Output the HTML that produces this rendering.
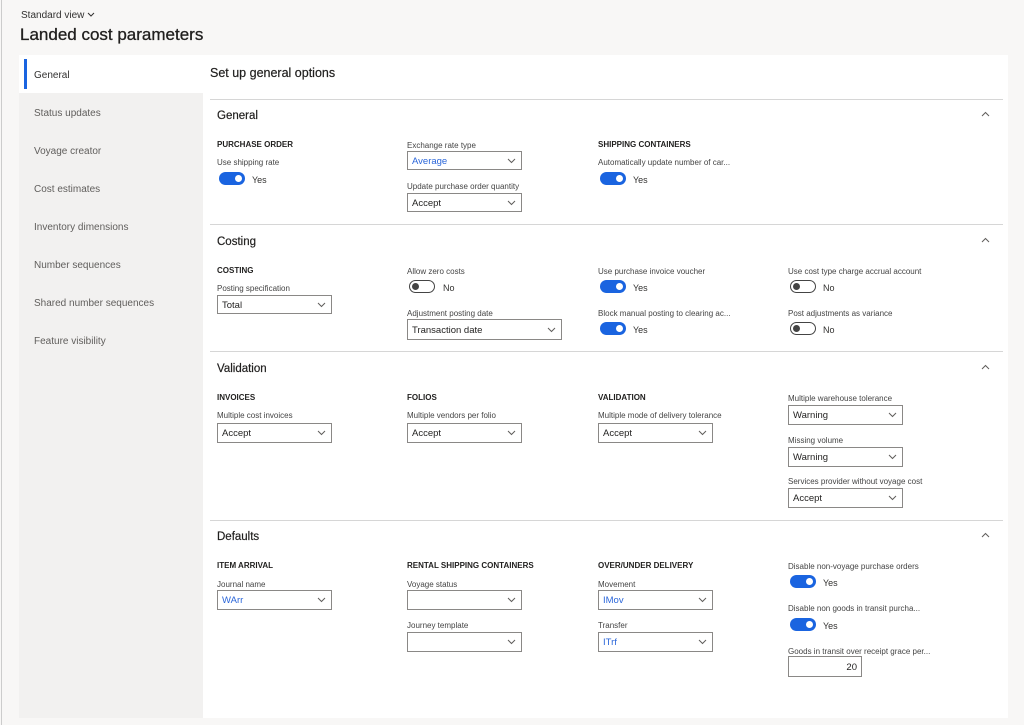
<!DOCTYPE html><html><head><style>
body{margin:0;width:1024px;height:725px;background:#f8f7f6;font-family:"Liberation Sans",sans-serif;position:relative;overflow:hidden;color:#323130}
.a{position:absolute;white-space:nowrap}
.nav{font-size:10px;color:#605e5c;margin-top:2px}
.h{font-size:11.5px;color:#201f1e;margin-top:2px;-webkit-text-stroke:0.2px #201f1e}
.gh{font-size:8px;font-weight:bold;color:#201f1e;margin-top:1px}
.lb{font-size:8px;color:#444;margin-top:1px}
.dd{position:absolute;height:19px;border:1px solid #8a8886;background:#fff;box-sizing:border-box;font-size:9.5px;line-height:19px;padding-left:4px;color:#201f1e}
.dd.b{color:#2b66d9}
.dd svg{position:absolute;right:5px;top:6px}
.tg{position:absolute;width:26px;height:13px;border-radius:7px;box-sizing:border-box}
.on{background:#1a64e0}
.on:after{content:"";position:absolute;right:3px;top:3px;width:7px;height:7px;border-radius:50%;background:#fff}
.off{border:1px solid #444;background:#fff}
.off:after{content:"";position:absolute;left:2px;top:2px;width:7px;height:7px;border-radius:50%;background:#444}
.tv{font-size:9px;color:#323130;margin-top:1px}
.ln{position:absolute;left:210px;width:793px;height:1px;background:#d6d6d6}
.car{position:absolute;left:981px}
</style></head><body>
<div class="a" style="left:1px;top:0;width:1px;height:725px;background:#ccc"></div>
<div class="a" style="left:21px;top:10px;font-size:10px;color:#323130">Standard view <svg width="8" height="6" viewBox="0 0 8 6"><path d="M1 1l3 3 3-3" stroke="#323130" fill="none"/></svg></div>
<div class="a" style="left:20px;top:25px;font-size:17px;color:#201f1e;-webkit-text-stroke:0.3px #201f1e">Landed cost parameters</div>
<div class="a" style="left:19px;top:55px;width:184px;height:663px;background:#f2f1f0"></div>
<div class="a" style="left:19px;top:55px;width:184px;height:38px;background:#fff"></div>
<div class="a" style="left:24px;top:59px;width:3px;height:30px;background:#1a64e0"></div>
<div class="a" style="left:203px;top:55px;width:805px;height:663px;background:#fff"></div>
<div class="a nav" style="left:34px;top:68px;color:#323130">General</div>
<div class="a nav" style="left:34px;top:106px">Status updates</div>
<div class="a nav" style="left:34px;top:144px">Voyage creator</div>
<div class="a nav" style="left:34px;top:182px">Cost estimates</div>
<div class="a nav" style="left:34px;top:220px">Inventory dimensions</div>
<div class="a nav" style="left:34px;top:258px">Number sequences</div>
<div class="a nav" style="left:34px;top:296px">Shared number sequences</div>
<div class="a nav" style="left:34px;top:334px">Feature visibility</div>
<div class="a" style="left:210px;top:66px;font-size:12.5px;color:#201f1e;-webkit-text-stroke:0.2px #201f1e">Set up general options</div>

<div class="ln" style="top:99px"></div>
<div class="ln" style="top:224px"></div>
<div class="ln" style="top:351px"></div>
<div class="ln" style="top:520px"></div>
<svg class="car" style="top:111px" width="9" height="6"><path d="M1 5l3.5-3.5L8 5" stroke="#605e5c" fill="none"/></svg>
<svg class="car" style="top:237px" width="9" height="6"><path d="M1 5l3.5-3.5L8 5" stroke="#605e5c" fill="none"/></svg>
<svg class="car" style="top:364px" width="9" height="6"><path d="M1 5l3.5-3.5L8 5" stroke="#605e5c" fill="none"/></svg>
<svg class="car" style="top:532px" width="9" height="6"><path d="M1 5l3.5-3.5L8 5" stroke="#605e5c" fill="none"/></svg>

<div class="a h" style="left:217px;top:108px">General</div>
<div class="a gh" style="left:217px;top:139px">PURCHASE ORDER</div>
<div class="a lb" style="left:217px;top:157px">Use shipping rate</div>
<div class="tg on" style="left:219px;top:172px"></div><div class="a tv" style="left:252px;top:174px">Yes</div>
<div class="a lb" style="left:407px;top:140px">Exchange rate type</div>
<div class="dd b" style="left:407px;top:151px;width:115px">Average<svg width="9" height="6"><path d="M1 1l3.5 3.5L8 1" stroke="#605e5c" fill="none"/></svg></div>
<div class="a lb" style="left:407px;top:181px">Update purchase order quantity</div>
<div class="dd" style="left:407px;top:193px;width:115px">Accept<svg width="9" height="6"><path d="M1 1l3.5 3.5L8 1" stroke="#605e5c" fill="none"/></svg></div>
<div class="a gh" style="left:598px;top:139px">SHIPPING CONTAINERS</div>
<div class="a lb" style="left:598px;top:157px">Automatically update number of car...</div>
<div class="tg on" style="left:600px;top:172px"></div><div class="a tv" style="left:633px;top:174px">Yes</div>

<div class="a h" style="left:217px;top:234px">Costing</div>
<div class="a gh" style="left:217px;top:265px">COSTING</div>
<div class="a lb" style="left:217px;top:283px">Posting specification</div>
<div class="dd" style="left:217px;top:295px;width:115px">Total<svg width="9" height="6"><path d="M1 1l3.5 3.5L8 1" stroke="#605e5c" fill="none"/></svg></div>
<div class="a lb" style="left:407px;top:266px">Allow zero costs</div>
<div class="tg off" style="left:409px;top:280px"></div><div class="a tv" style="left:443px;top:282px">No</div>
<div class="a lb" style="left:407px;top:308px">Adjustment posting date</div>
<div class="dd" style="left:407px;top:319px;width:155px;height:21px;line-height:21px">Transaction date<svg width="9" height="6" style="top:7px"><path d="M1 1l3.5 3.5L8 1" stroke="#605e5c" fill="none"/></svg></div>
<div class="a lb" style="left:598px;top:266px">Use purchase invoice voucher</div>
<div class="tg on" style="left:600px;top:280px"></div><div class="a tv" style="left:633px;top:282px">Yes</div>
<div class="a lb" style="left:598px;top:308px">Block manual posting to clearing ac...</div>
<div class="tg on" style="left:600px;top:322px"></div><div class="a tv" style="left:633px;top:324px">Yes</div>
<div class="a lb" style="left:788px;top:266px">Use cost type charge accrual account</div>
<div class="tg off" style="left:790px;top:280px"></div><div class="a tv" style="left:823px;top:282px">No</div>
<div class="a lb" style="left:788px;top:308px">Post adjustments as variance</div>
<div class="tg off" style="left:790px;top:322px"></div><div class="a tv" style="left:823px;top:324px">No</div>

<div class="a h" style="left:217px;top:361px">Validation</div>
<div class="a gh" style="left:217px;top:392px">INVOICES</div>
<div class="a lb" style="left:217px;top:410px">Multiple cost invoices</div>
<div class="dd" style="left:217px;top:423px;width:115px;height:20px">Accept<svg width="9" height="6"><path d="M1 1l3.5 3.5L8 1" stroke="#605e5c" fill="none"/></svg></div>
<div class="a gh" style="left:407px;top:392px">FOLIOS</div>
<div class="a lb" style="left:407px;top:410px">Multiple vendors per folio</div>
<div class="dd" style="left:407px;top:423px;width:115px;height:20px">Accept<svg width="9" height="6"><path d="M1 1l3.5 3.5L8 1" stroke="#605e5c" fill="none"/></svg></div>
<div class="a gh" style="left:598px;top:392px">VALIDATION</div>
<div class="a lb" style="left:598px;top:410px">Multiple mode of delivery tolerance</div>
<div class="dd" style="left:598px;top:423px;width:115px;height:20px">Accept<svg width="9" height="6"><path d="M1 1l3.5 3.5L8 1" stroke="#605e5c" fill="none"/></svg></div>
<div class="a lb" style="left:788px;top:393px">Multiple warehouse tolerance</div>
<div class="dd" style="left:788px;top:405px;width:115px;height:20px">Warning<svg width="9" height="6"><path d="M1 1l3.5 3.5L8 1" stroke="#605e5c" fill="none"/></svg></div>
<div class="a lb" style="left:788px;top:435px">Missing volume</div>
<div class="dd" style="left:788px;top:447px;width:115px;height:20px">Warning<svg width="9" height="6"><path d="M1 1l3.5 3.5L8 1" stroke="#605e5c" fill="none"/></svg></div>
<div class="a lb" style="left:788px;top:476px">Services provider without voyage cost</div>
<div class="dd" style="left:788px;top:488px;width:115px;height:20px">Accept<svg width="9" height="6"><path d="M1 1l3.5 3.5L8 1" stroke="#605e5c" fill="none"/></svg></div>

<div class="a h" style="left:217px;top:529px">Defaults</div>
<div class="a gh" style="left:217px;top:560px">ITEM ARRIVAL</div>
<div class="a lb" style="left:217px;top:579px">Journal name</div>
<div class="dd b" style="left:217px;top:590px;width:115px;height:20px">WArr<svg width="9" height="6"><path d="M1 1l3.5 3.5L8 1" stroke="#605e5c" fill="none"/></svg></div>
<div class="a gh" style="left:407px;top:560px">RENTAL SHIPPING CONTAINERS</div>
<div class="a lb" style="left:407px;top:579px">Voyage status</div>
<div class="dd" style="left:407px;top:590px;width:115px;height:20px"><svg width="9" height="6"><path d="M1 1l3.5 3.5L8 1" stroke="#605e5c" fill="none"/></svg></div>
<div class="a lb" style="left:407px;top:620px">Journey template</div>
<div class="dd" style="left:407px;top:632px;width:115px;height:20px"><svg width="9" height="6"><path d="M1 1l3.5 3.5L8 1" stroke="#605e5c" fill="none"/></svg></div>
<div class="a gh" style="left:598px;top:560px">OVER/UNDER DELIVERY</div>
<div class="a lb" style="left:598px;top:579px">Movement</div>
<div class="dd b" style="left:598px;top:590px;width:115px;height:20px">IMov<svg width="9" height="6"><path d="M1 1l3.5 3.5L8 1" stroke="#605e5c" fill="none"/></svg></div>
<div class="a lb" style="left:598px;top:620px">Transfer</div>
<div class="dd b" style="left:598px;top:632px;width:115px;height:20px">ITrf<svg width="9" height="6"><path d="M1 1l3.5 3.5L8 1" stroke="#605e5c" fill="none"/></svg></div>
<div class="a lb" style="left:788px;top:561px">Disable non-voyage purchase orders</div>
<div class="tg on" style="left:790px;top:575px"></div><div class="a tv" style="left:823px;top:577px">Yes</div>
<div class="a lb" style="left:788px;top:603px">Disable non goods in transit purcha...</div>
<div class="tg on" style="left:790px;top:618px"></div><div class="a tv" style="left:823px;top:620px">Yes</div>
<div class="a lb" style="left:788px;top:646px">Goods in transit over receipt grace per...</div>
<div class="dd" style="left:788px;top:656px;width:74px;height:21px;text-align:right;padding-right:4px;line-height:21px">20</div>
</body></html>
